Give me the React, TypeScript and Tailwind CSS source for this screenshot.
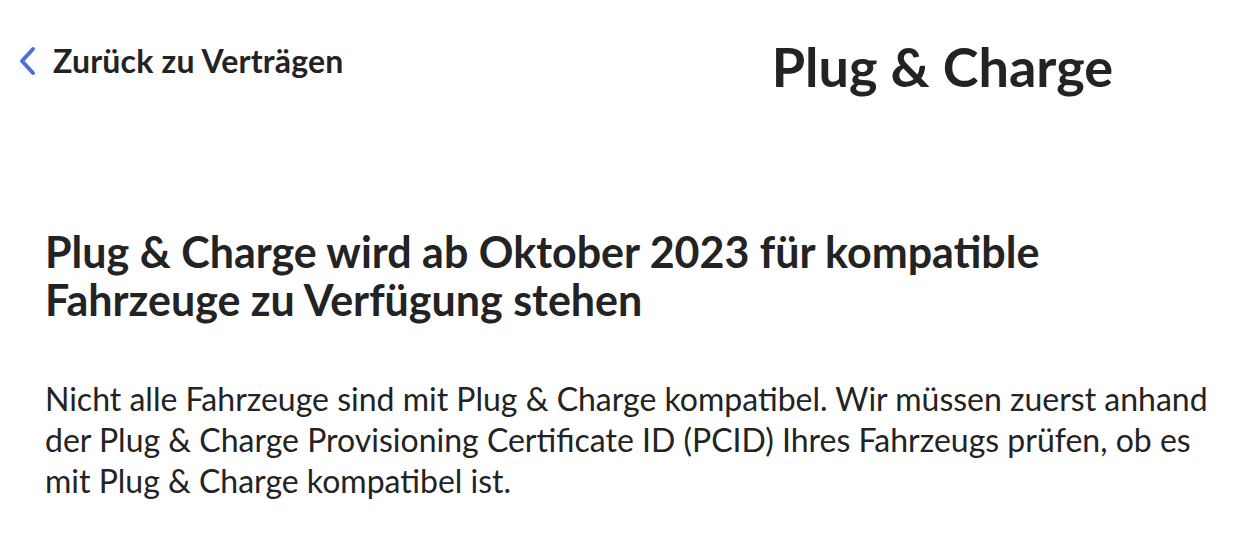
import React from "react";

const ChevronLeft: React.FC = () => (
  <svg width="20" height="30" viewBox="0 0 20 30" fill="none" aria-hidden="true">
    <path
      d="M15 3 L4 15 L15 27"
      stroke="#4a6fdc"
      strokeWidth="4"
      strokeLinecap="round"
      strokeLinejoin="round"
    />
  </svg>
);

const App: React.FC = () => {
  return (
    <div
      className="min-h-[535px] w-full bg-white text-[#232323]"
      style={{ fontFamily: "Lato, 'Noto Sans', sans-serif" }}
    >
      {/* header row */}
      <div className="flex items-start pt-[40px]">
        <a href="#" className="flex items-center gap-[15px] pl-[18px] pt-[5px]">
          <ChevronLeft />
          <span className="text-[32px] font-bold leading-none tracking-[0.2px]">Zurück zu Verträgen</span>
        </a>
        <h1 className="ml-auto mr-[126px] text-[54px] font-bold leading-none">Plug &amp; Charge</h1>
      </div>

      {/* info block */}
      <div className="pl-[45px] pr-[30px] pt-[134px]">
        <h2 className="text-[43px] font-bold leading-[48px]">
          Plug &amp; Charge wird ab Oktober 2023 für kompatible
          <br />
          Fahrzeuge zu Verfügung stehen
        </h2>
        <p className="mt-[54px] whitespace-nowrap text-[32px] leading-[41px]">
          Nicht alle Fahrzeuge sind mit Plug &amp; Charge kompatibel. Wir müssen zuerst anhand
          <br />
          der Plug &amp; Charge Provisioning Certificate ID (PCID) Ihres Fahrzeugs prüfen, ob es
          <br />
          mit Plug &amp; Charge kompatibel ist.
        </p>
      </div>
    </div>
  );
};

export default App;
